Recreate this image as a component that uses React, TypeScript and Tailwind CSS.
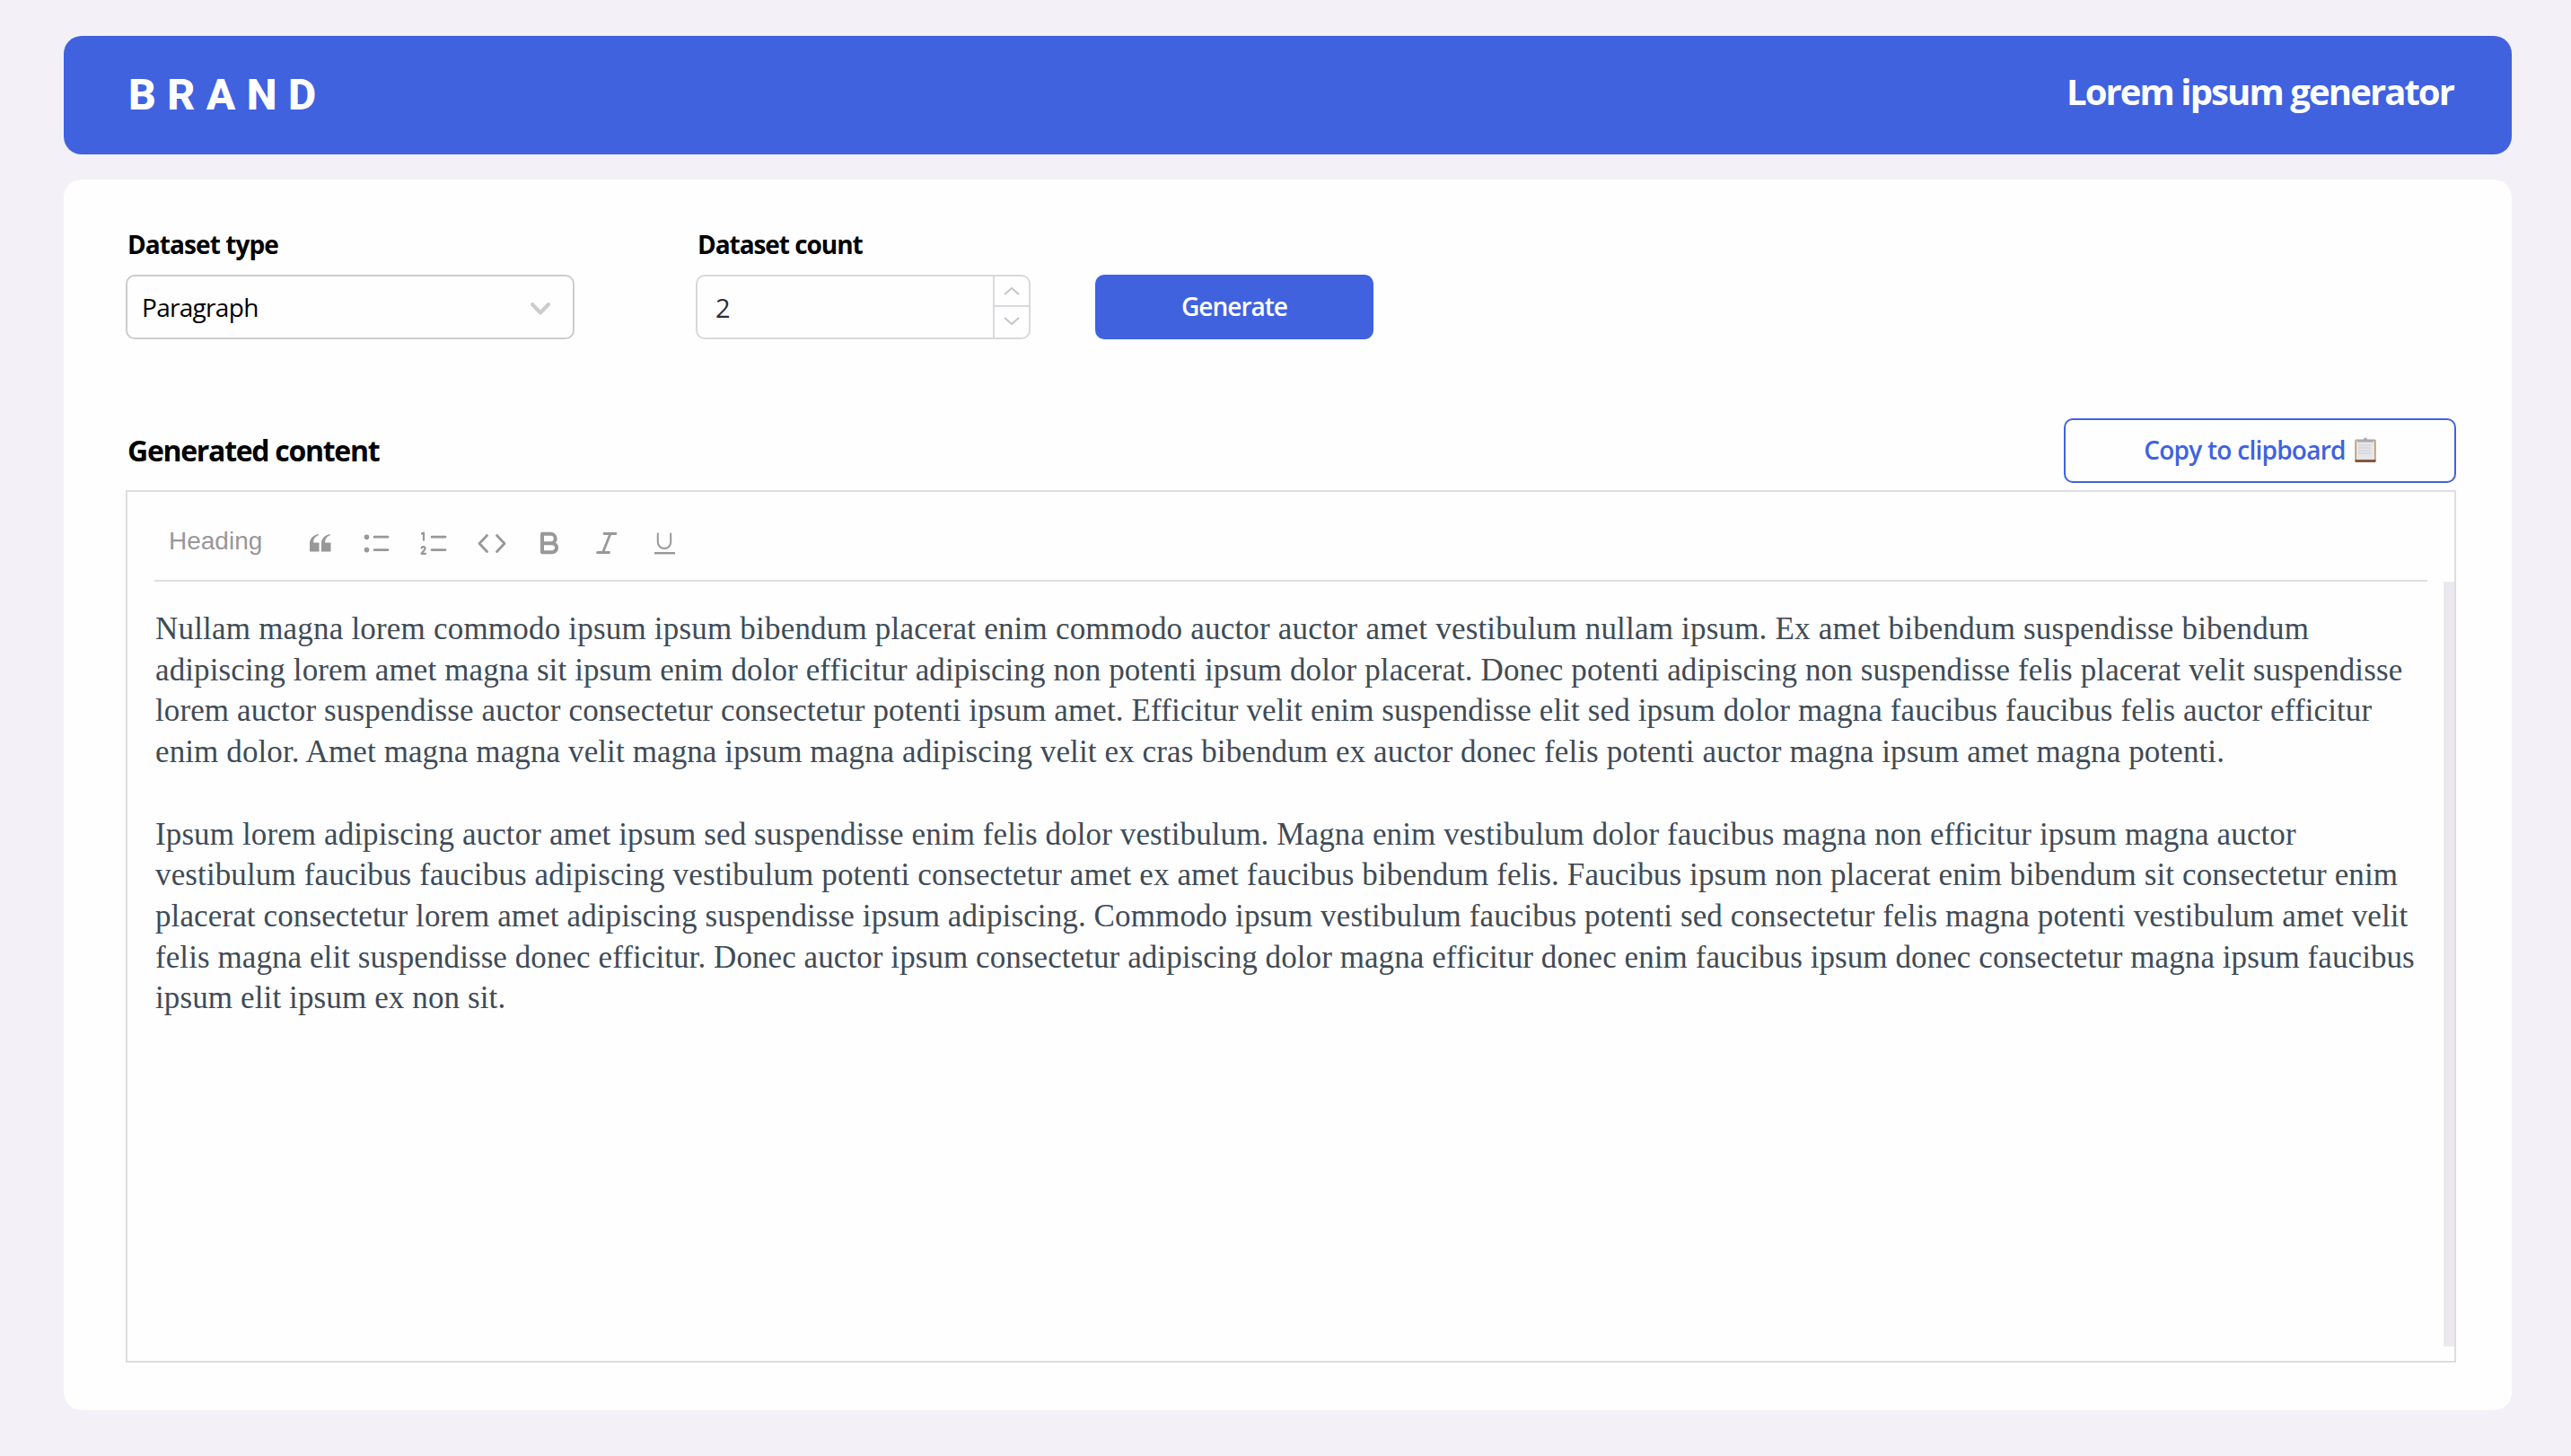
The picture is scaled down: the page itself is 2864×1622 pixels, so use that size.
import type { ReactNode } from 'react';

interface TextLine {
  text: string;
  tracking: string;
}

const paragraphs: TextLine[][] = [
  [
    { text: 'Nullam magna lorem commodo ipsum ipsum bibendum placerat enim commodo auctor auctor amet vestibulum nullam ipsum. Ex amet bibendum suspendisse bibendum', tracking: 'tracking-[0.2px]' },
    { text: 'adipiscing lorem amet magna sit ipsum enim dolor efficitur adipiscing non potenti ipsum dolor placerat. Donec potenti adipiscing non suspendisse felis placerat velit suspendisse', tracking: 'tracking-[0.11px]' },
    { text: 'lorem auctor suspendisse auctor consectetur consectetur potenti ipsum amet. Efficitur velit enim suspendisse elit sed ipsum dolor magna faucibus faucibus felis auctor efficitur', tracking: 'tracking-[0.115px]' },
    { text: 'enim dolor. Amet magna magna velit magna ipsum magna adipiscing velit ex cras bibendum ex auctor donec felis potenti auctor magna ipsum amet magna potenti.', tracking: 'tracking-[0.11px]' },
  ],
  [
    { text: 'Ipsum lorem adipiscing auctor amet ipsum sed suspendisse enim felis dolor vestibulum. Magna enim vestibulum dolor faucibus magna non efficitur ipsum magna auctor', tracking: 'tracking-[0.115px]' },
    { text: 'vestibulum faucibus faucibus adipiscing vestibulum potenti consectetur amet ex amet faucibus bibendum felis. Faucibus ipsum non placerat enim bibendum sit consectetur enim', tracking: 'tracking-[0.126px]' },
    { text: 'placerat consectetur lorem amet adipiscing suspendisse ipsum adipiscing. Commodo ipsum vestibulum faucibus potenti sed consectetur felis magna potenti vestibulum amet velit', tracking: 'tracking-[0.117px]' },
    { text: 'felis magna elit suspendisse donec efficitur. Donec auctor ipsum consectetur adipiscing dolor magna efficitur donec enim faucibus ipsum donec consectetur magna ipsum faucibus', tracking: 'tracking-[0.077px]' },
    { text: 'ipsum elit ipsum ex non sit.', tracking: 'tracking-[0.12px]' },
  ],
];

function ToolIcon({ children }: { children: ReactNode }) {
  return (
    <svg className="size-10 shrink-0" viewBox="0 0 40 40" fill="none" stroke="currentColor" strokeWidth="2.8" strokeLinecap="round" strokeLinejoin="round">
      {children}
    </svg>
  );
}

function Toolbar() {
  return (
    <div className="flex h-[100px] items-center border-b-2 border-[#dedee0] pt-4 pl-4 text-[#999799]">
      <span className="w-[148px] pb-1 font-['Liberation_Sans',sans-serif] text-[28px] leading-10">Heading</span>
      <div className="flex gap-6">
        <ToolIcon>
          <path d="M9 20v9.500h10.500v-10h-6.500c0-4 2-7 6-8.500v-1c-6 1-10 5-10 10zM22 20v9.500h10.500v-10h-6.500c0-4 2-7 6-8.500v-1c-6 1-10 5-10 10z" fill="currentColor" stroke="none" />
        </ToolIcon>
        <ToolIcon>
          <circle cx="8.500" cy="13.200" r="2.800" fill="currentColor" stroke="none" />
          <circle cx="8.500" cy="27.600" r="2.800" fill="currentColor" stroke="none" />
          <path d="M17 13.200h15M17 27.600h15" />
        </ToolIcon>
        <ToolIcon>
          <path d="M6 9.600l2-1v8M5.500 25.500c.4-2 4.500-1.800 4 .8-.3 1.800-3 3.400-4 5.500h4.500" strokeWidth="2.200" />
          <path d="M17 13.200h15M17 27.600h15" />
        </ToolIcon>
        <ToolIcon>
          <path d="M14.500 11.500l-8.500 9 8.500 9M25.500 11.500l8.500 9-8.500 9" />
        </ToolIcon>
        <ToolIcon>
          <path d="M12 9.800h9.500a5 5 0 0 1 0 10.400h-9.500zM12 20.200h11a5 5 0 0 1 0 10h-11z" strokeWidth="4" />
        </ToolIcon>
        <ToolIcon>
          <path d="M17 9.500h13M9.500 30.500h13M24 9.500l-8.500 21" />
        </ToolIcon>
        <ToolIcon>
          <path d="M12.800 9.500v9.500a7 6.800 0 0 0 14.400 0v-9.500" strokeWidth="2" />
          <path d="M9 31.200h23" strokeLinecap="butt" strokeWidth="2.400" />
        </ToolIcon>
      </div>
    </div>
  );
}

function Editor() {
  return (
    <div className="flex h-[972px] border-2 border-[#dedde1]">
      <div className="ml-[30px] w-[2532px] shrink-0">
        <Toolbar />
        <div className="space-y-[45.700px] pt-[30px] pl-px font-['Liberation_Serif',serif] text-[35px] leading-[45.700px] text-[#3f4b56]">
          {paragraphs.map((lines, i) => (
            <div key={i}>
              {lines.map((line) => (
                <p key={line.text} className={`w-max whitespace-nowrap ${line.tracking}`}>{line.text}</p>
              ))}
            </div>
          ))}
        </div>
      </div>
      <div className="mt-[100px] ml-auto h-[852px] w-3 bg-[#ebe9ef]" />
    </div>
  );
}

function NumberInput() {
  return (
    <div className="flex h-[72px] w-[373px] overflow-hidden rounded-[10px] border-2 border-[#d9d8dc]">
      <span className="flex-1 pl-5 text-[29px] leading-[70px] text-[#2c2d33]">2</span>
      <div className="flex w-10 flex-col border-l-2 border-[#d9d8dc] text-[#c4c4ca]">
        <div className="flex h-[34px] items-center justify-center border-b-2 border-[#d9d8dc]">
          <svg className="h-2.5 w-5" viewBox="0 0 20 10" fill="none" stroke="currentColor" strokeWidth="2"><path d="M2 9l8-7 8 7" /></svg>
        </div>
        <div className="flex flex-1 items-center justify-center pb-0.5">
          <svg className="h-2.5 w-5" viewBox="0 0 20 10" fill="none" stroke="currentColor" strokeWidth="2"><path d="M2 1l8 7 8-7" /></svg>
        </div>
      </div>
    </div>
  );
}

function Clipboard() {
  return (
    <svg className="h-[29px] w-6" viewBox="0 0 24 29">
      <rect x="0.300" y="2.500" width="23.400" height="25.500" rx="1.500" fill="#c29a6c" />
      <path d="M.6 25h22.800v2q0 1-1 1h-20.800q-1 0-1-1z" fill="#85583f" />
      <path d="M2 4h20v21h-20z" fill="#e6e5e9" />
      <path d="M4 9h14M4 12h14M4 15h14M4 18h14" stroke="#cfced4" strokeWidth="1" />
      <path d="M3 5.500v-2.500h5.500q1.500 0 2-1.500a1.600 1.600 0 0 1 3 0q.5 1.500 2 1.500h5.500v2.500z" fill="#a9a9ae" />
    </svg>
  );
}

export default function App() {
  return (
    <div className="h-[1622px] w-[2864px] bg-[#f3f0f7] pt-10 pl-[71px] font-['Open_Sans','Noto_Sans',sans-serif] text-black">
      <header className="flex h-[132px] w-[2727px] items-center justify-between rounded-[20px] bg-[#4062df] pr-[65px] pl-[72px] text-white">
        <span className="font-['Roboto',sans-serif] text-[48px] font-extrabold tracking-[12.500px]">BRAND</span>
        <h1 className="pb-2 text-[40px] font-bold tracking-[-1.900px]">Lorem ipsum generator</h1>
      </header>
      <main className="mt-7 h-[1371px] w-[2727px] rounded-[20px] bg-[#fefefe] pt-[52px] pr-[62px] pl-[69px]">
        <div className="flex items-end">
          <div className="w-[635px]">
            <label className="block pb-[14px] pl-[2px] text-[28px] leading-10 font-bold tracking-[-0.920px]">Dataset type</label>
            <div className="flex h-[72px] w-[500px] items-center justify-between rounded-[10px] border-2 border-[#cccbce] pr-6 pl-4">
              <span className="text-[28px] tracking-[-0.700px]">Paragraph</span>
              <svg className="mt-1 h-4 w-6" viewBox="0 0 24 16" fill="none" stroke="#cccbce" strokeWidth="4" strokeLinecap="round" strokeLinejoin="round"><path d="M3 3l9 9.500 9-9.500" /></svg>
            </div>
          </div>
          <div className="w-[445px]">
            <label className="block pb-[14px] pl-[2px] text-[28px] leading-10 font-bold tracking-[-1.050px]">Dataset count</label>
            <NumberInput />
          </div>
          <button className="h-[72px] w-[310px] rounded-[10px] bg-[#4062df] pb-0.5 text-[28px] font-semibold tracking-[-1px] text-white">Generate</button>
        </div>
        <div className="mt-[88px] mb-2 flex h-[72px] items-center justify-between">
          <h2 className="pl-[2px] text-[32px] font-bold tracking-[-1.290px]">Generated content</h2>
          <button className="flex h-[72px] w-[437px] items-center justify-center gap-2.5 rounded-[10px] border-2 border-[#4062df] pb-0.5 text-[28px] font-semibold tracking-[-0.750px] text-[#4062df]">
            Copy to clipboard
            <Clipboard />
          </button>
        </div>
        <Editor />
      </main>
    </div>
  );
}
